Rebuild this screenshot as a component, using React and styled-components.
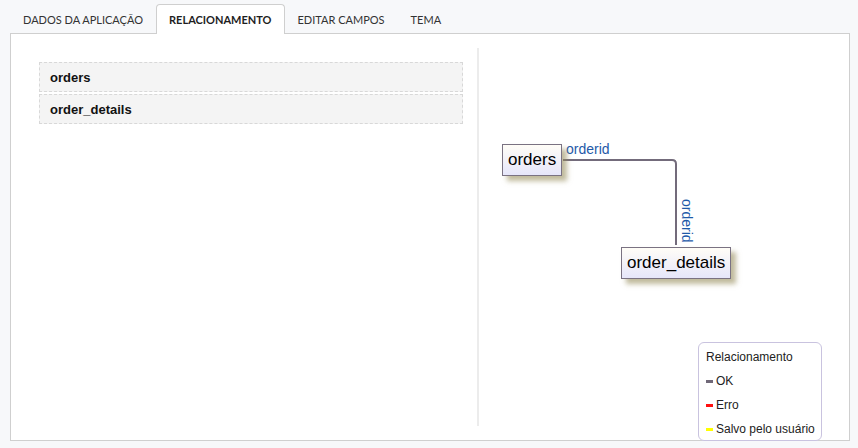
import React from 'react';
import styled, { createGlobalStyle } from 'styled-components';

const GlobalStyle = createGlobalStyle`
  html, body {
    margin: 0;
    padding: 0;
    background: #f7f8fa;
  }
  * { box-sizing: border-box; }
`;

const tabs = ['DADOS DA APLICAÇÃO', 'RELACIONAMENTO', 'EDITAR CAMPOS', 'TEMA'];
const tables = ['orders', 'order_details'];
const legend = [
  { label: 'OK', color: '#706878' },
  { label: 'Erro', color: '#ff1010' },
  { label: 'Salvo pelo usuário', color: '#ffff00' },
];

export default function App() {
  return (
    <Page>
      <GlobalStyle />
      <TabBar>
        {tabs.map((t) => (
          <Tab key={t} $active={t === 'RELACIONAMENTO'}>{t}</Tab>
        ))}
      </TabBar>
      <Panel>
        <LeftColumn>
          <TableList>
            {tables.map((t) => <TableRow key={t}>{t}</TableRow>)}
          </TableList>
        </LeftColumn>
        <Canvas>
          <Wires width="370" height="377">
            <path d="M84 112 H193 Q197 112 197 116 V197" fill="none" stroke="#736b7b" strokeWidth="2" />
          </Wires>
          <EdgeLabel style={{ left: 87, top: 94 }}>orderid</EdgeLabel>
          <EdgeLabel $vertical style={{ left: 201, top: 151 }}>orderid</EdgeLabel>
          <Node style={{ left: 23, top: 96 }}>orders</Node>
          <Node style={{ left: 142, top: 199 }}>order_details</Node>
          <Legend>
            <LegendTitle>Relacionamento</LegendTitle>
            {legend.map((l) => (
              <LegendItem key={l.label}>
                <Swatch $color={l.color} />
                {l.label}
              </LegendItem>
            ))}
          </Legend>
        </Canvas>
      </Panel>
    </Page>
  );
}

const Page = styled.div`
  width: 858px;
  height: 448px;
  padding: 0 8px 0 10px;
  background: #f7f8fa;
  font-family: Lato, "Liberation Sans", sans-serif;
`;

const TabBar = styled.div`
  display: flex;
  height: 33px;
  padding-top: 4px;
  position: relative;
  z-index: 1;
`;

const Tab = styled.div`
  display: flex;
  align-items: center;
  padding: 0 12px;
  height: ${(p) => (p.$active ? '30px' : '29px')};
  font-size: 11px;
  color: ${(p) => (p.$active ? '#1e1e1e' : '#333')};
  font-weight: ${(p) => (p.$active ? 700 : 400)};
  background: ${(p) => (p.$active ? '#fff' : 'transparent')};
  border: 1px solid ${(p) => (p.$active ? '#cfcfcf' : 'transparent')};
  border-bottom: none;
  border-radius: 4px 4px 0 0;
`;

const Panel = styled.div`
  display: flex;
  height: 408px;
  padding: 14px 0;
  background: #fff;
  border: 1px solid #cfcfcf;
`;

const LeftColumn = styled.div`
  width: 466px;
  padding: 14px 14px 0 28px;
`;

const TableList = styled.div`
  display: flex;
  flex-direction: column;
  gap: 2px;
`;

const TableRow = styled.div`
  height: 30px;
  display: flex;
  align-items: center;
  padding-left: 10px;
  background: #f4f4f4;
  border: 1px dashed #d8d8d8;
  font-family: "Liberation Sans", Arial, sans-serif;
  font-weight: 700;
  font-size: 13px;
  color: #111;
`;

const Canvas = styled.div`
  position: relative;
  flex: 1;
  border-left: 2px solid #ececec;
`;

const Wires = styled.svg`
  position: absolute;
  left: 0;
  top: 0;
`;

const Node = styled.div`
  position: absolute;
  height: 32px;
  padding: 0 5px;
  display: flex;
  align-items: center;
  border: 1.5px solid #7a7282;
  background: linear-gradient(#fffdf7, #e6e6fa);
  box-shadow: 5px 5px 5px rgba(150, 140, 90, 0.6);
  font-family: "Liberation Sans", Arial, sans-serif;
  font-size: 17px;
  color: #000;
`;

const EdgeLabel = styled.div`
  position: absolute;
  font-family: "Liberation Sans", Arial, sans-serif;
  font-size: 14px;
  line-height: 14px;
  color: #1f5aa8;
  ${(p) => p.$vertical && 'writing-mode: vertical-rl;'}
`;

const Legend = styled.div`
  position: absolute;
  left: 219px;
  top: 294px;
  width: 124px;
  height: 99px;
  padding: 7px 0 0 7px;
  background: #fff;
  border: 1px solid #c9c3df;
  border-radius: 6px;
  font-family: "Liberation Sans", Arial, sans-serif;
  font-size: 12px;
  color: #222;
  display: flex;
  flex-direction: column;
  gap: 10px;
`;

const LegendTitle = styled.div`
  line-height: 14px;
`;

const LegendItem = styled.div`
  display: flex;
  align-items: center;
  gap: 3px;
  line-height: 14px;
`;

const Swatch = styled.span`
  display: inline-block;
  width: 7px;
  height: 3px;
  background: ${(p) => p.$color};
`;
